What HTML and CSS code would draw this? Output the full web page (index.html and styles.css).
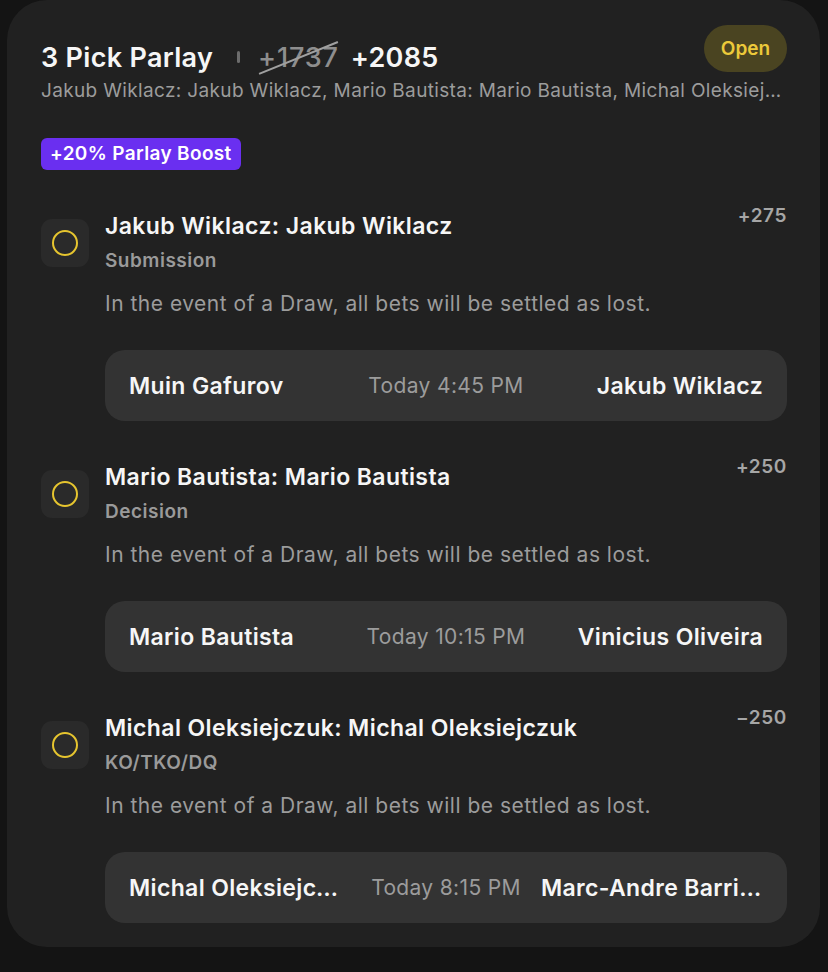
FILE: index.html
```html
<!doctype html>
<html>
<head>
    <meta charset="UTF-8">
    <title>3 Pick Parlay</title>
    <link rel="stylesheet" href="styles.css">
</head>
<body>
<div class="card">
    <div class="head">
        <div class="title-row">
            <span class="title">3 Pick Parlay</span>
            <span class="divider"></span>
            <span class="old-odds">+1737</span>
            <span class="new-odds">+2085</span>
        </div>
        <div class="status">Open</div>
        <div class="summary">Jakub Wiklacz: Jakub Wiklacz, Mario Bautista: Mario Bautista, Michal Oleksiejczuk: Michal Oleksiejczuk</div>
    </div>

    <div class="boost">+20% Parlay Boost</div>

    <div class="legs">
        <div class="leg">
            <div class="leg-icon"><span class="ring"></span></div>
            <div class="leg-body">
                <div class="leg-top">
                    <div class="leg-name">
                        <div class="leg-title">Jakub Wiklacz: Jakub Wiklacz</div>
                        <div class="leg-market">Submission</div>
                    </div>
                    <div class="leg-odds">+275</div>
                </div>
                <div class="leg-note">In the event of a Draw, all bets will be settled as lost.</div>
                <div class="match">
                    <div class="match-side">Muin Gafurov</div>
                    <div class="match-time">Today 4:45 PM</div>
                    <div class="match-side right">Jakub Wiklacz</div>
                </div>
            </div>
        </div>

        <div class="leg">
            <div class="leg-icon"><span class="ring"></span></div>
            <div class="leg-body">
                <div class="leg-top">
                    <div class="leg-name">
                        <div class="leg-title">Mario Bautista: Mario Bautista</div>
                        <div class="leg-market">Decision</div>
                    </div>
                    <div class="leg-odds">+250</div>
                </div>
                <div class="leg-note">In the event of a Draw, all bets will be settled as lost.</div>
                <div class="match">
                    <div class="match-side">Mario Bautista</div>
                    <div class="match-time">Today 10:15 PM</div>
                    <div class="match-side right">Vinicius Oliveira</div>
                </div>
            </div>
        </div>

        <div class="leg">
            <div class="leg-icon"><span class="ring"></span></div>
            <div class="leg-body">
                <div class="leg-top">
                    <div class="leg-name">
                        <div class="leg-title">Michal Oleksiejczuk: Michal Oleksiejczuk</div>
                        <div class="leg-market">KO/TKO/DQ</div>
                    </div>
                    <div class="leg-odds">&minus;250</div>
                </div>
                <div class="leg-note">In the event of a Draw, all bets will be settled as lost.</div>
                <div class="match">
                    <div class="match-side">Michal Oleksiejczuk</div>
                    <div class="match-time">Today 8:15 PM</div>
                    <div class="match-side right">Marc-Andre Barriault</div>
                </div>
            </div>
        </div>
    </div>
</div>
</body>
</html>
```

FILE: styles.css
```css
* {
    margin: 0;
    padding: 0;
    box-sizing: border-box;
}

body {
    background-color: #141414;
    font-family: Inter, "Noto Sans", sans-serif;
    color: #f4f4f4;
}

.card {
    width: 813px;
    height: 947px;
    margin-left: 7px;
    padding: 25px 33px 24px 34px;
    background-color: #212121;
    border-radius: 40px;
}

/* 头部 */
.head {
    display: grid;
    grid-template-columns: minmax(0, 1fr) auto;
    align-items: start;
}

.title-row {
    display: flex;
    align-items: center;
    height: 32px;
    margin-top: 16px;
    font-size: 27px;
    font-weight: 600;
    letter-spacing: 0.3px;
}

.title {
    color: #f6f6f6;
}

.divider {
    width: 3px;
    height: 12px;
    margin: 0 18px 0 24px;
    border-radius: 2px;
    background-color: #6c6c6c;
}

.old-odds {
    position: relative;
    color: #8e8e8e;
    font-weight: 500;
    letter-spacing: 0.8px;
}

.old-odds::after {
    content: "";
    position: absolute;
    left: -2px;
    right: -2px;
    top: 50%;
    height: 2px;
    background-color: #a0a0a0;
    transform: rotate(-22deg);
}

.new-odds {
    margin-left: 12px;
    color: #f6f6f6;
}

.summary {
    grid-column: 1 / -1;
    margin-top: 8px;
    font-size: 19px;
    line-height: 20px;
    letter-spacing: 0.35px;
    color: #9c9c9c;
    white-space: nowrap;
    overflow: hidden;
    text-overflow: ellipsis;
}

.status {
    width: 83px;
    height: 47px;
    line-height: 47px;
    text-align: center;
    border-radius: 24px;
    background-color: #4a4421;
    color: #ecc93a;
    font-size: 19px;
    font-weight: 600;
}

.boost {
    display: inline-block;
    margin-top: 37px;
    height: 32px;
    line-height: 32px;
    padding: 0 9px;
    border-radius: 6px;
    background-color: #6a2ff0;
    color: #fff;
    font-size: 19px;
    font-weight: 600;
    letter-spacing: 0.35px;
}

/* 选项列表 */
.legs {
    display: flex;
    flex-direction: column;
    gap: 35px;
    margin-top: 35px;
}

.leg {
    display: flex;
    gap: 16px;
}

.leg-icon {
    flex: none;
    width: 48px;
    height: 48px;
    margin-top: 14px;
    border-radius: 11px;
    background-color: #2a2a2a;
    display: flex;
    align-items: center;
    justify-content: center;
}

.ring {
    width: 26px;
    height: 26px;
    border: 2px solid #e6c52f;
    border-radius: 50%;
}

.leg-body {
    flex: 1;
    min-width: 0;
}

.leg-top {
    display: flex;
    justify-content: space-between;
    align-items: flex-start;
}

.leg-name {
    padding-top: 7px;
}

.leg-title {
    font-size: 23px;
    line-height: 28px;
    font-weight: 600;
    letter-spacing: 0.4px;
    color: #f6f6f6;
}

.leg-market {
    margin-top: 10px;
    font-size: 19px;
    line-height: 22px;
    font-weight: 600;
    letter-spacing: 0.5px;
    color: #9a9a9a;
}

.leg-odds {
    font-size: 19px;
    line-height: 22px;
    font-weight: 600;
    letter-spacing: 0.6px;
    color: #a6a6a6;
}

.leg-note {
    margin-top: 19px;
    font-size: 21px;
    line-height: 26px;
    letter-spacing: 0.5px;
    color: #9c9c9c;
}

.match {
    display: grid;
    grid-template-columns: 1fr auto 1fr;
    gap: 20px;
    align-items: center;
    height: 71px;
    margin-top: 33px;
    padding: 0 24px;
    border-radius: 20px;
    background-color: #333;
}

.match-side {
    font-size: 23px;
    font-weight: 600;
    letter-spacing: 0.35px;
    color: #f6f6f6;
    white-space: nowrap;
    overflow: hidden;
    text-overflow: ellipsis;
}

.match-side.right {
    text-align: right;
}

.match-time {
    font-size: 21px;
    letter-spacing: 0.35px;
    color: #9c9c9c;
    white-space: nowrap;
}
```
